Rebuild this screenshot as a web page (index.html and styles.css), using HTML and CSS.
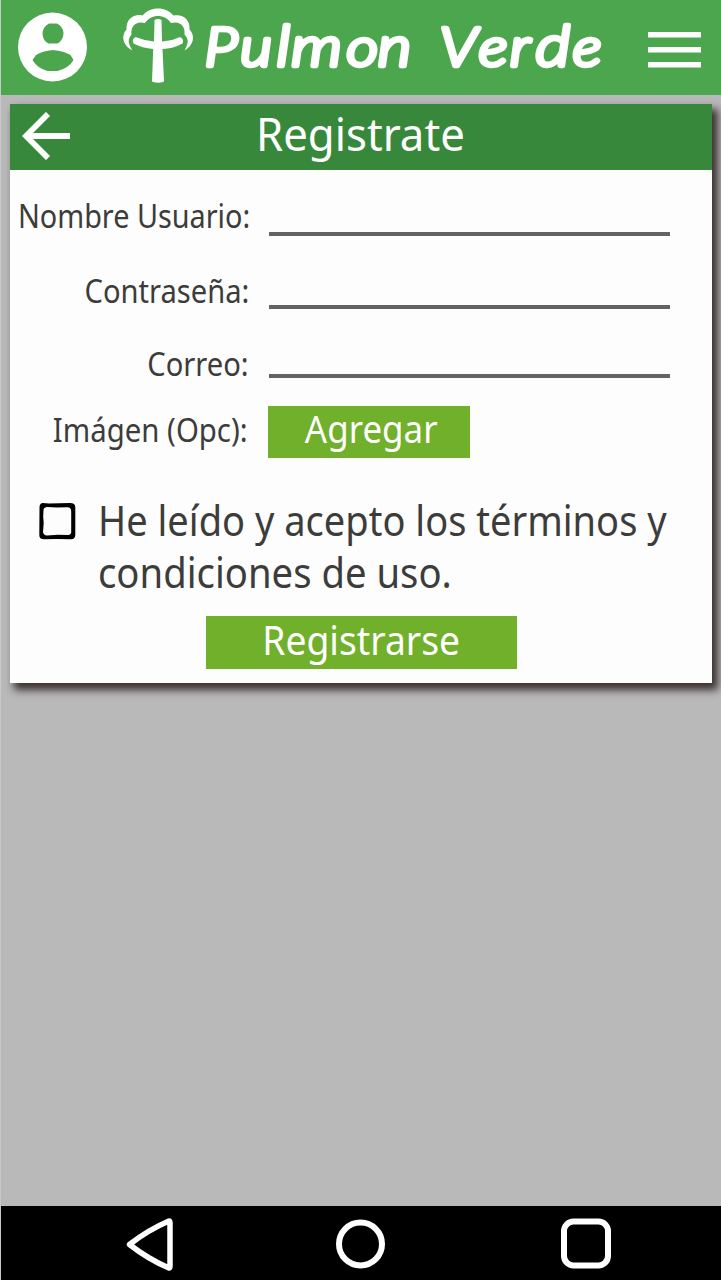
FILE: index.html
```html
<!DOCTYPE html>
<html lang="es">
<head>
<meta charset="utf-8">
<title>Pulmon Verde</title>
<link rel="stylesheet" href="styles.css">
</head>
<body>
<div class="app">
  <header class="topbar">
    <svg class="avatar" viewBox="0 0 70 70"><path fill="#fff" fill-rule="evenodd" d="M34.500 .5a34.500 34.500 0 1 1 0 69a34.500 34.500 0 0 1 0-69M31 11.500Q24.500 15 24.500 22Q25 29 30.500 31.500H39.500Q45.500 28 45.500 21Q45 14.500 39 11.500ZM14.500 48L18 43Q24 39 35 38Q46 39 52.500 43L55.500 48Q51 56 39.500 59H29.500Q19 56 14.500 48Z"/></svg>
    <svg class="tree" viewBox="0 0 76 80"><path fill="#fff" d="M12.500 45.500C3 41 .5 31 6.500 24.500C6 14 14 8.500 22.500 10.500C30 1 46 1 53.500 10.500C63 8.500 70.500 15 69.500 24.500C76 31 73 41 64.500 45.500C68 39 69.500 35 64.500 29.500C65.500 21 60 15.500 51 18C45 8.500 31 8.500 25 18C16 15.500 10.500 21 11.500 29.500C7 35 8.500 39 12.500 45.500ZM34.500 15Q38 13 41.500 15L42 36.500Q53 35.500 60 32Q64.500 34 62.500 38.500Q53.500 43.500 42.500 44L44 76.500Q38 79 32 76.500L33.200 44Q22.500 43 13.500 38.500Q11.500 34 15.500 32Q24 35.500 34 36.500Z"/></svg>
    <svg class="brand" viewBox="0 0 412 80"><text class="brand-text" transform="scale(1.16 1)" y="63.500" x="5.500 36.500 67.500 80.500 128 155 208.500 242 269 291 323">Pu<tspan class="tall">l</tspan><tspan class="wide">m</tspan>o<tspan class="wide">n</tspan>Ver<tspan class="tall">d</tspan>e</text></svg>
    <svg class="menu" viewBox="0 0 53 36"><path fill="#fff" d="M0 0H53V5.400H0ZM0 15H53V20.400H0ZM0 30H53V35.400H0Z"/></svg>
  </header>
  <main class="content">
    <section class="card">
      <div class="card-head">
        <svg class="back" viewBox="0 0 48 48"><path fill="none" stroke="#fff" stroke-width="5.800" d="M48 24H6M26 2L4 24L26 46"/></svg>
        <h1 class="title">Registrate</h1>
      </div>
      <form class="form">
        <div class="row row-user"><label class="label l-user" for="u">Nombre Usuario:</label><input class="field" id="u"></div>
        <div class="row row-pass"><label class="label l-pass" for="p">Contraseña:</label><input class="field" id="p"></div>
        <div class="row row-mail"><label class="label l-mail" for="c">Correo:</label><input class="field" id="c"></div>
        <div class="row row-image"><span class="label l-image">Imágen (Opc):</span><div class="button add"><span>Agregar</span></div></div>
        <div class="terms">
          <svg class="check" viewBox="0 0 37 37"><path fill="#000" fill-rule="evenodd" d="M4 0L10 .5L31 0Q36.300 0 36.300 4V32Q36 36.300 32 36.300L17 36L5 36.300Q.3 36.300 .3 32L.5 5Q.3 0 4 0ZM8 4Q4.500 4.500 4.500 7L4.200 14L4.700 20L4 29Q4.500 32.300 8 32.500L19 31.800L29 32Q32.200 31.500 32.200 29V8Q32 4.500 29 4.300L18 4.500Z"/></svg>
          <div class="terms-text"><div class="t1">He leído y acepto los términos y</div><div class="t2">condiciones de uso.</div></div>
        </div>
        <div class="button submit"><span>Registrarse</span></div>
      </form>
    </section>
  </main>
  <nav class="navbar">
    <svg class="nav-back" viewBox="0 0 50 54"><path fill="none" stroke="#fff" stroke-width="5.500" stroke-linejoin="round" d="M3.500 27.500Q22 13 43 4Q44 4 44 6V49Q44 51 43 51Q22 42 3.500 27.500Z"/></svg>
    <svg class="nav-home" viewBox="0 0 50 50"><circle cx="25.500" cy="25" r="21.500" fill="none" stroke="#fff" stroke-width="6"/></svg>
    <svg class="nav-recent" viewBox="0 0 52 52"><rect x="4" y="3.500" width="44" height="44" rx="9.500" fill="none" stroke="#fff" stroke-width="6"/></svg>
  </nav>
</div>
</body>
</html>
```

FILE: styles.css
```css
* { box-sizing: border-box; }
body { margin: 0; font-family: "Noto Sans", sans-serif; color: #3c3c3b; }
.app { width: 721px; height: 1280px; display: flex; flex-direction: column; background: #b9b9b9; overflow: hidden; border-left: 1px solid #c9c9c9; }
.topbar { height: 95px; display: flex; align-items: flex-start; background: #4ca64e; flex: none; }
.avatar { width: 70px; height: 70px; margin: 12px 0 0 17px; }
.tree { width: 76px; height: 80px; margin: 5px 0 0 32px; }
.brand { width: 412px; height: 80px; margin: 3px 0 0 2px; overflow: visible; }
.brand-text { font-family: Lato, sans-serif; font-style: italic; font-weight: 300; font-size: 53px; fill: #fff; stroke: #fff; stroke-width: 4.4px; stroke-linejoin: round; }
.tall { font-size: 58px; }
.wide { font-size: 56px; }
.menu { width: 53px; height: 36px; margin: 32px 0 0 38px; }
.content { flex: 1; padding: 9px 8px 0 9px; }
.card { width: 702px; height: 579px; background: #fdfdfd; box-shadow: 5px 6px 8px 1px #3a3030; }
.card-head { height: 66px; padding: 0 0 6px 12px; display: flex; align-items: center; background: #37883a; }
.back { width: 48px; height: 48px; margin-top: 4px; }
.title { margin: -2px 0 0 186px; font-size: 46px; font-weight: 400; line-height: 57px; color: #fff; transform: scaleX(.95); transform-origin: left; white-space: nowrap; }
.row { display: grid; grid-template: 100% / 241px 401px; column-gap: 18px; }
.label { font-size: 32px; line-height: 40px; text-align: right; justify-self: end; white-space: nowrap; transform-origin: right; }
.field { width: 401px; height: 100%; padding: 0; border: 0; border-bottom: 4px solid #636363; background: none; outline: 0; }
.row-user { height: 66px; }
.row-pass { height: 73px; }
.row-mail { height: 69px; }
.row .label { padding-right: 1px; }
.row-user .label { padding-top: 26px; }
.row-pass .label { padding: 35px 2px 0 0; }
.row-mail .label { padding: 35px 3px 0 0; }
.l-user { transform: scaleX(.9); }
.l-pass { transform: scaleX(.91); }
.l-mail { transform: scaleX(.91); }
.l-image { transform: scaleX(.917); }
.row-image { height: 52px; margin-top: 28px; grid-template-columns: 240px 202px; }
.row-image .label { padding: 4px 3px 0 0; }
.button { display: flex; justify-content: center; background: #71b02b; color: #fff; }
.button span { display: block; white-space: nowrap; transform: scaleX(.932); }
.add { height: 52px; font-size: 37.5px; line-height: 45px; }
.add span { margin-left: 4px; }
.terms { display: flex; margin: 45px 0 0 29px; }
.check { width: 37px; height: 37px; flex: none; }
.terms-text { margin: -9px 0 0 22px; font-size: 41px; line-height: 52px; white-space: nowrap; }
.t1, .t2 { transform: scaleX(.928); transform-origin: left; width: max-content; }
.t2 { transform: scaleX(.933); }
.submit { width: 311px; height: 53px; margin: 18px 0 0 196px; font-size: 40px; line-height: 48px; }
.navbar { height: 74px; margin-left: -1px; background: #000; display: flex; align-items: flex-start; flex: none; }
.nav-back { width: 50px; height: 54px; margin: 11px 0 0 126px; }
.nav-home { width: 50px; height: 50px; margin: 13px 0 0 159px; }
.nav-recent { width: 52px; height: 52px; margin: 12px 0 0 175px; }
```
